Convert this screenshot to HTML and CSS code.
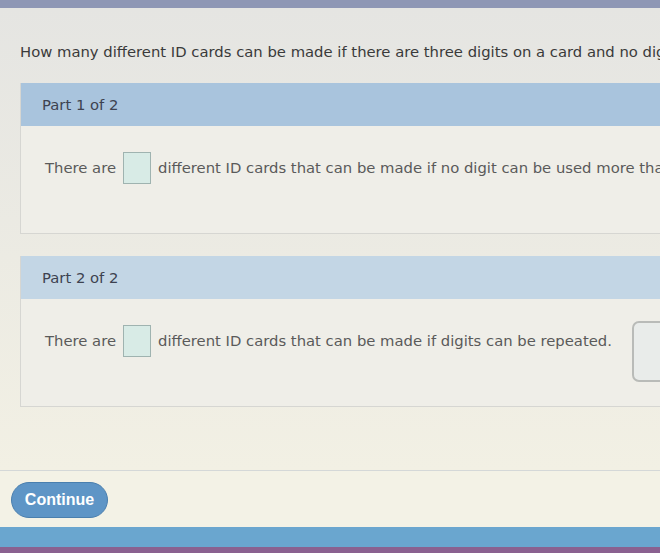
FILE: index.html
```html
<!DOCTYPE html>
<html lang="en">
<head>
    <meta charset="UTF-8">
    <meta name="viewport" content="width=device-width, initial-scale=1.0">
    <title>ID Cards</title>
    <link rel="stylesheet" href="styles.css">
</head>
<body>
    <div class="topbar"></div>

    <div class="content">
        <p class="question">How many different ID cards can be made if there are three digits on a card and no digit can be used more than once?</p>

        <div class="part">
            <div class="part-head part-head-1">Part 1 of 2</div>
            <div class="part-body">
                <div class="answer-row">
                    <span>There are</span>
                    <span class="blank"></span>
                    <span>different ID cards that can be made if no digit can be used more than once.</span>
                </div>
            </div>
        </div>

        <div class="part">
            <div class="part-head part-head-2">Part 2 of 2</div>
            <div class="part-body">
                <div class="answer-row">
                    <span>There are</span>
                    <span class="blank"></span>
                    <span>different ID cards that can be made if digits can be repeated.</span>
                    <span class="check"></span>
                </div>
            </div>
        </div>
    </div>

    <div class="footer">
        <button class="continue">Continue</button>
    </div>
    <div class="bottombar"></div>
    <div class="taskbar"></div>
</body>
</html>
```

FILE: styles.css
```css
body {
    margin: 0;
    width: 660px;
    height: 553px;
    overflow: hidden;
    background-color: #ecebe4;
    font-family: "DejaVu Sans", Verdana, sans-serif;
}
.topbar {
    height: 8px;
    background-color: #8e97b5;
}
.content {
    height: 462px;
    padding-left: 20px;
    box-sizing: border-box;
    background: linear-gradient(#e5e5e2, #f2f0e4);
}
.question {
    margin: 0;
    padding-top: 35px;
    height: 40px;
    font-size: 14.8px;
    line-height: 18px;
    color: #3a3a3a;
    white-space: nowrap;
}
.part {
    width: 700px;
    margin-bottom: 22px;
    border-left: 1px solid #d6d6d2;
}
.part-head {
    height: 43px;
    line-height: 43px;
    padding-left: 21px;
    font-size: 14.8px;
    color: #3d4250;
}
.part-head-1 {
    background-color: #a9c4dd;
}
.part-head-2 {
    background-color: #c3d6e5;
}
.part-body {
    height: 107px;
    border-bottom: 1px solid #d6d6d2;
    background-color: #efeee8;
}
.answer-row {
    display: flex;
    align-items: flex-start;
    gap: 7px;
    padding: 26px 0 0 24px;
    font-size: 14.8px;
    color: #5a5a5a;
    white-space: nowrap;
}
.answer-row span {
    line-height: 32px;
}
.blank {
    width: 26px;
    height: 30px;
    border: 1px solid #9fb3b0;
    background-color: #d8ebe6;
}
.check {
    width: 40px;
    height: 57px;
    margin: -4px 0 0 13px;
    border: 2px solid #b9bbb8;
    border-radius: 7px;
    background-color: #e9ecea;
}
.footer {
    height: 57px;
    border-top: 1px solid #d4d8d8;
    padding: 11px 0 0 11px;
    box-sizing: border-box;
    background-color: #f3f2e6;
}
.continue {
    width: 97px;
    height: 36px;
    border: 1px solid #4a7fae;
    border-radius: 18px;
    background-color: #5e95c6;
    color: #ffffff;
    font-family: "Liberation Sans", Arial, sans-serif;
    font-weight: bold;
    font-size: 16px;
}
.bottombar {
    height: 20px;
    background-color: #6aa6cf;
}
.taskbar {
    height: 10px;
    background-color: #8a6190;
}
```
